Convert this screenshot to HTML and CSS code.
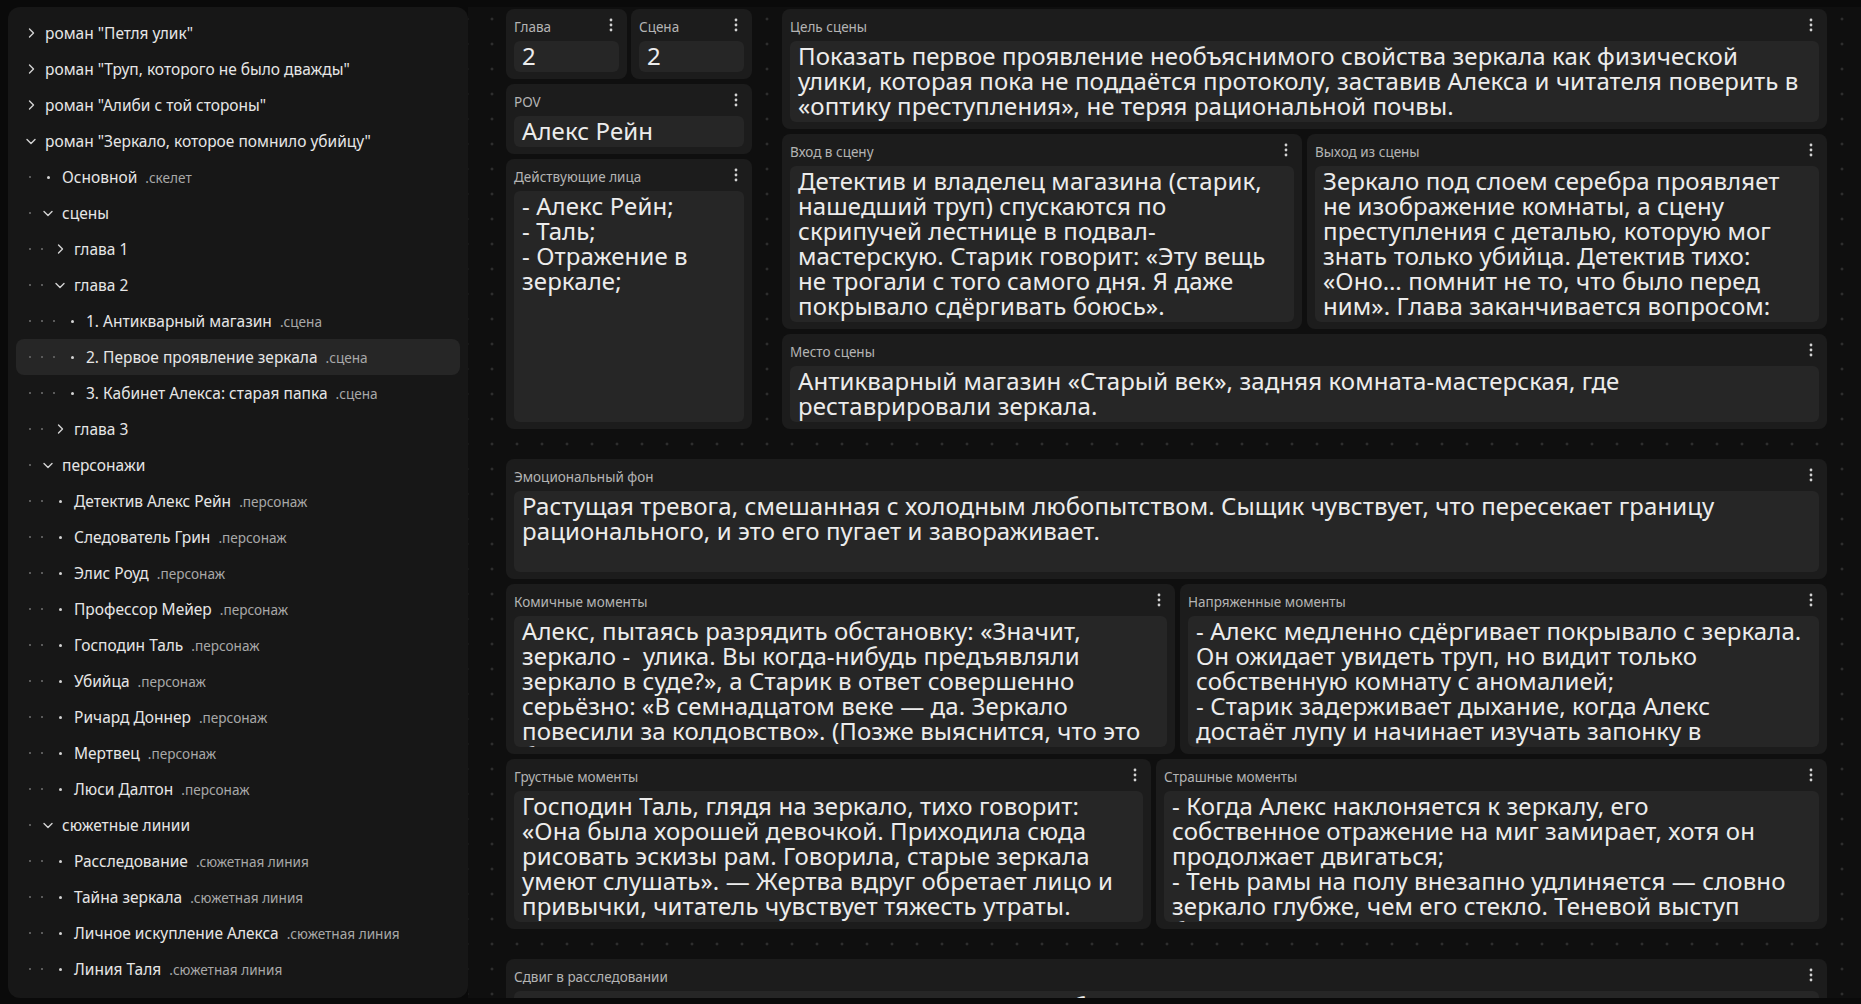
FILE: index.html
```html
<!DOCTYPE html>
<html lang="ru">
<head>
  <meta charset="UTF-8">
  <title>Зеркало, которое помнило убийцу</title>
  <link rel="stylesheet" href="styles.css">
</head>
<body>

<svg class="sprite" aria-hidden="true">
  <symbol id="chev-r" viewBox="0 0 12 12"><path d="M4.5 2 8.5 6 4.5 10"/></symbol>
  <symbol id="chev-d" viewBox="0 0 12 12"><path d="M2 4.5 6 8.5 10 4.5"/></symbol>
  <symbol id="kebab" viewBox="0 0 4 14"><circle cx="2" cy="2" r="1.4"/><circle cx="2" cy="7" r="1.4"/><circle cx="2" cy="12" r="1.4"/></symbol>
</svg>

<!-- Project tree -->
<aside class="sidebar">
  <div class="row"><span class="mark top"><svg class="chev"><use href="#chev-r"/></svg></span><span class="name">роман "Петля улик"</span></div>
  <div class="row"><span class="mark top"><svg class="chev"><use href="#chev-r"/></svg></span><span class="name">роман "Труп, которого не было дважды"</span></div>
  <div class="row"><span class="mark top"><svg class="chev"><use href="#chev-r"/></svg></span><span class="name">роман "Алиби с той стороны"</span></div>
  <div class="row"><span class="mark top"><svg class="chev"><use href="#chev-d"/></svg></span><span class="name">роман "Зеркало, которое помнило убийцу"</span></div>
  <div class="row"><i class="g"></i><span class="mark"><b class="dot"></b></span><span class="name">Основной<small class="kind">.скелет</small></span></div>
  <div class="row"><i class="g"></i><span class="mark"><svg class="chev"><use href="#chev-d"/></svg></span><span class="name">сцены</span></div>
  <div class="row"><i class="g"></i><i class="g"></i><span class="mark"><svg class="chev"><use href="#chev-r"/></svg></span><span class="name">глава 1</span></div>
  <div class="row"><i class="g"></i><i class="g"></i><span class="mark"><svg class="chev"><use href="#chev-d"/></svg></span><span class="name">глава 2</span></div>
  <div class="row"><i class="g"></i><i class="g"></i><i class="g"></i><span class="mark"><b class="dot"></b></span><span class="name">1. Антикварный магазин<small class="kind">.сцена</small></span></div>
  <div class="row active"><i class="g"></i><i class="g"></i><i class="g"></i><span class="mark"><b class="dot"></b></span><span class="name">2. Первое проявление зеркала<small class="kind">.сцена</small></span></div>
  <div class="row"><i class="g"></i><i class="g"></i><i class="g"></i><span class="mark"><b class="dot"></b></span><span class="name">3. Кабинет Алекса: старая папка<small class="kind">.сцена</small></span></div>
  <div class="row"><i class="g"></i><i class="g"></i><span class="mark"><svg class="chev"><use href="#chev-r"/></svg></span><span class="name">глава 3</span></div>
  <div class="row"><i class="g"></i><span class="mark"><svg class="chev"><use href="#chev-d"/></svg></span><span class="name">персонажи</span></div>
  <div class="row"><i class="g"></i><i class="g"></i><span class="mark"><b class="dot"></b></span><span class="name">Детектив Алекс Рейн<small class="kind">.персонаж</small></span></div>
  <div class="row"><i class="g"></i><i class="g"></i><span class="mark"><b class="dot"></b></span><span class="name">Следователь Грин<small class="kind">.персонаж</small></span></div>
  <div class="row"><i class="g"></i><i class="g"></i><span class="mark"><b class="dot"></b></span><span class="name">Элис Роуд<small class="kind">.персонаж</small></span></div>
  <div class="row"><i class="g"></i><i class="g"></i><span class="mark"><b class="dot"></b></span><span class="name">Профессор Мейер<small class="kind">.персонаж</small></span></div>
  <div class="row"><i class="g"></i><i class="g"></i><span class="mark"><b class="dot"></b></span><span class="name">Господин Таль<small class="kind">.персонаж</small></span></div>
  <div class="row"><i class="g"></i><i class="g"></i><span class="mark"><b class="dot"></b></span><span class="name">Убийца<small class="kind">.персонаж</small></span></div>
  <div class="row"><i class="g"></i><i class="g"></i><span class="mark"><b class="dot"></b></span><span class="name">Ричард Доннер<small class="kind">.персонаж</small></span></div>
  <div class="row"><i class="g"></i><i class="g"></i><span class="mark"><b class="dot"></b></span><span class="name">Мертвец<small class="kind">.персонаж</small></span></div>
  <div class="row"><i class="g"></i><i class="g"></i><span class="mark"><b class="dot"></b></span><span class="name">Люси Далтон<small class="kind">.персонаж</small></span></div>
  <div class="row"><i class="g"></i><span class="mark"><svg class="chev"><use href="#chev-d"/></svg></span><span class="name">сюжетные линии</span></div>
  <div class="row"><i class="g"></i><i class="g"></i><span class="mark"><b class="dot"></b></span><span class="name">Расследование<small class="kind">.сюжетная линия</small></span></div>
  <div class="row"><i class="g"></i><i class="g"></i><span class="mark"><b class="dot"></b></span><span class="name">Тайна зеркала<small class="kind">.сюжетная линия</small></span></div>
  <div class="row"><i class="g"></i><i class="g"></i><span class="mark"><b class="dot"></b></span><span class="name">Личное искупление Алекса<small class="kind">.сюжетная линия</small></span></div>
  <div class="row"><i class="g"></i><i class="g"></i><span class="mark"><b class="dot"></b></span><span class="name">Линия Таля<small class="kind">.сюжетная линия</small></span></div>
</aside>

<!-- Scene board -->
<main class="canvas">

  <div class="group group-top">
    <div class="col col-left">
      <div class="pair h70">
        <section class="card">
          <div class="card-head"><span>Глава</span><svg class="kebab"><use href="#kebab"/></svg></div>
          <div class="field">2</div>
        </section>
        <section class="card">
          <div class="card-head"><span>Сцена</span><svg class="kebab"><use href="#kebab"/></svg></div>
          <div class="field">2</div>
        </section>
      </div>
      <section class="card h70">
        <div class="card-head"><span>POV</span><svg class="kebab"><use href="#kebab"/></svg></div>
        <div class="field">Алекс Рейн</div>
      </section>
      <section class="card grow">
        <div class="card-head"><span>Действующие лица</span><svg class="kebab"><use href="#kebab"/></svg></div>
        <div class="field">- Алекс Рейн;<br>- Таль;<br>- Отражение в<br>зеркале;</div>
      </section>
    </div>

    <div class="col col-right">
      <section class="card h120">
        <div class="card-head"><span>Цель сцены</span><svg class="kebab"><use href="#kebab"/></svg></div>
        <div class="field">Показать первое проявление необъяснимого свойства зеркала как физической<br>улики, которая пока не поддаётся протоколу, заставив Алекса и читателя поверить в<br>«оптику преступления», не теряя рациональной почвы.</div>
      </section>
      <div class="pair h195">
        <section class="card">
          <div class="card-head"><span>Вход в сцену</span><svg class="kebab"><use href="#kebab"/></svg></div>
          <div class="field">Детектив и владелец магазина (старик,<br>нашедший труп) спускаются по<br>скрипучей лестнице в подвал-<br>мастерскую. Старик говорит: «Эту вещь<br>не трогали с того самого дня. Я даже<br>покрывало сдёргивать боюсь».<br>Зеркало стоит у стены под тканью.</div>
        </section>
        <section class="card">
          <div class="card-head"><span>Выход из сцены</span><svg class="kebab"><use href="#kebab"/></svg></div>
          <div class="field">Зеркало под слоем серебра проявляет<br>не изображение комнаты, а сцену<br>преступления с деталью, которую мог<br>знать только убийца. Детектив тихо:<br>«Оно… помнит не то, что было перед<br>ним». Глава заканчивается вопросом:<br>кто смотрел в него последним?</div>
        </section>
      </div>
      <section class="card h95">
        <div class="card-head"><span>Место сцены</span><svg class="kebab"><use href="#kebab"/></svg></div>
        <div class="field">Антикварный магазин «Старый век», задняя комната-мастерская, где<br>реставрировали зеркала.</div>
      </section>
    </div>
  </div>

  <div class="group group-mid">
    <section class="card h120">
      <div class="card-head"><span>Эмоциональный фон</span><svg class="kebab"><use href="#kebab"/></svg></div>
      <div class="field">Растущая тревога, смешанная с холодным любопытством. Сыщик чувствует, что пересекает границу<br>рационального, и это его пугает и завораживает.</div>
    </section>
    <div class="pair h170">
      <section class="card w669">
        <div class="card-head"><span>Комичные моменты</span><svg class="kebab"><use href="#kebab"/></svg></div>
        <div class="field">Алекс, пытаясь разрядить обстановку: «Значит,<br>зеркало -&nbsp; улика. Вы когда-нибудь предъявляли<br>зеркало в суде?», а Старик в ответ совершенно<br>серьёзно: «В семнадцатом веке — да. Зеркало<br>повесили за колдовство». (Позже выяснится, что это<br>была не шутка, а цитата из старого дела.)</div>
      </section>
      <section class="card">
        <div class="card-head"><span>Напряженные моменты</span><svg class="kebab"><use href="#kebab"/></svg></div>
        <div class="field">- Алекс медленно сдёргивает покрывало с зеркала.<br>Он ожидает увидеть труп, но видит только<br>собственную комнату с аномалией;<br>- Старик задерживает дыхание, когда Алекс<br>достаёт лупу и начинает изучать запонку в<br>отражении, которой нет в комнате.</div>
      </section>
    </div>
    <div class="pair h170">
      <section class="card w645">
        <div class="card-head"><span>Грустные моменты</span><svg class="kebab"><use href="#kebab"/></svg></div>
        <div class="field">Господин Таль, глядя на зеркало, тихо говорит:<br>«Она была хорошей девочкой. Приходила сюда<br>рисовать эскизы рам. Говорила, старые зеркала<br>умеют слушать». — Жертва вдруг обретает лицо и<br>привычки, читатель чувствует тяжесть утраты.</div>
      </section>
      <section class="card">
        <div class="card-head"><span>Страшные моменты</span><svg class="kebab"><use href="#kebab"/></svg></div>
        <div class="field">- Когда Алекс наклоняется к зеркалу, его<br>собственное отражение на миг замирает, хотя он<br>продолжает двигаться;<br>- Тень рамы на полу внезапно удлиняется — словно<br>зеркало глубже, чем его стекло. Теневой выступ<br>будто тянется к ногам Алекса.</div>
      </section>
    </div>
  </div>

  <div class="group">
    <section class="card h120">
      <div class="card-head"><span>Сдвиг в расследовании</span><svg class="kebab"><use href="#kebab"/></svg></div>
      <div class="field">Детектив впервые допускает, что улика может быть не предметом, а свидетелем: зеркало «помнит» и хранит то, что видело.</div>
    </section>
  </div>

</main>

</body>
</html>
```

FILE: styles.css
```css
* {
  box-sizing: border-box;
}

body {
  margin: 0;
  height: 100vh;
  padding: 7px 0 6px 8px;
  display: flex;
  background: #0a0a0a;
  color: #e6e6e6;
  font-family: "Noto Sans", sans-serif;
  overflow: hidden;
}

.sprite {
  position: absolute;
  width: 0;
  height: 0;
}

/* ---- tree ---- */

.sidebar {
  width: 460px;
  flex: none;
  background: #171717;
  border-radius: 12px;
  padding: 8px;
}

.row {
  height: 36px;
  display: flex;
  align-items: center;
  padding-left: 8px;
  border-radius: 8px;
  font-size: 15.5px;
  white-space: nowrap;
}

.row.active {
  background: #262626;
}

.g {
  width: 12px;
  height: 36px;
  flex: none;
  background: radial-gradient(circle, #5a5a5a 0.9px, transparent 1.4px);
}

.mark {
  width: 24px;
  flex: none;
  display: flex;
  align-items: center;
  justify-content: center;
  margin-right: 2px;
  color: #d4d4d4;
}

.mark.top {
  margin-left: -5px;
}

.chev {
  width: 12px;
  height: 12px;
  fill: none;
  stroke: currentColor;
  stroke-width: 1.4;
  stroke-linecap: round;
  stroke-linejoin: round;
}

.dot {
  width: 3px;
  height: 3px;
  border-radius: 50%;
  background: currentColor;
}

.kind {
  margin-left: 8px;
  font-size: 13.6px;
  color: #a8a8a8;
}

/* ---- board ---- */

.canvas {
  flex: 1;
  min-width: 0;
  overflow: hidden;
  padding: 2px 34px 0 38px;
  background-color: #0f0f0f;
  background-image: radial-gradient(circle, #3e3e3e 0.9px, transparent 1.4px);
  background-size: 25px 25px;
  background-position: 11.5px -0.5px;
  display: flex;
  flex-direction: column;
  gap: 30px;
}

.group {
  flex: none;
  display: flex;
  flex-direction: column;
  gap: 5px;
}

.group-top {
  flex-direction: row;
  gap: 30px;
  height: 420px;
}

.col {
  display: flex;
  flex-direction: column;
  gap: 5px;
}

.col-left {
  width: 246px;
}

.col-right {
  width: 1045px;
}

.pair {
  display: flex;
  gap: 5px;
}

.pair > .card {
  flex: 1;
}

.col-left .pair {
  gap: 4px;
}

.h70 { height: 70px; flex: none; }
.h95 { height: 95px; flex: none; }
.h120 { height: 120px; flex: none; }
.h170 { height: 170px; flex: none; }
.h195 { height: 195px; flex: none; }
.grow { flex: 1; }

.pair > .w669 { flex: none; width: 669px; }
.pair > .w645 { flex: none; width: 645px; }

.card {
  min-width: 0;
  background: #1c1c1c;
  border-radius: 8px;
  padding: 0 8px 7px;
  display: flex;
  flex-direction: column;
}

.card-head {
  height: 32px;
  flex: none;
  padding-top: 3px;
  display: flex;
  align-items: center;
  justify-content: space-between;
  font-size: 13.5px;
  color: #b4b4b4;
}

.kebab {
  width: 4px;
  height: 14px;
  fill: #d2d2d2;
  margin: 0 6px 3px 0;
}

.field {
  flex: 1;
  min-height: 0;
  background: #262626;
  border-radius: 6px;
  padding: 2px 8px 4px;
  font-size: 24px;
  line-height: 25px;
  letter-spacing: 0.1px;
  color: #ececec;
  white-space: nowrap;
  overflow: hidden;
}
```
